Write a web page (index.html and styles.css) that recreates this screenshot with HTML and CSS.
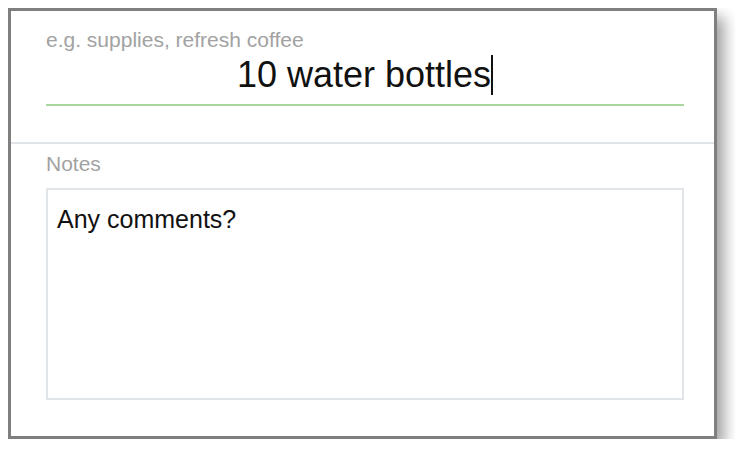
FILE: index.html
```html
<!DOCTYPE html>
<html>
<head>
<meta charset="utf-8">
<link rel="stylesheet" href="styles.css">
</head>
<body>
<div class="frame">
  <div class="top">
    <div class="hint">e.g. supplies, refresh coffee</div>
    <div class="title-field"><span class="value">10 water bottles</span><span class="caret"></span></div>
  </div>
  <div class="notes">
    <div class="label">Notes</div>
    <div class="notes-box">Any comments?</div>
  </div>
</div>
</body>
</html>
```
FILE: styles.css
```css
body {
  margin: 8px;
  background: #fff;
  font-family: "Liberation Sans", Arial, sans-serif;
}
.frame {
  width: 703px;
  background: #fff;
  border: 3px solid #7f7f7f;
  box-shadow: 7px 9px 14px rgba(0, 0, 0, 0.38);
}
.top {
  padding: 17px 30px 36px 35px;
  border-bottom: 2px solid #e0e4e8;
}
.hint {
  font-size: 21px;
  line-height: 24px;
  color: #a2a2a2;
}
.title-field {
  margin-top: 3px;
  font-size: 36px;
  line-height: 40px;
  color: #111;
  text-align: center;
  padding-bottom: 9px;
  border-bottom: 2px solid #a8d8a0;
  display: flex;
  justify-content: center;
  align-items: center;
}
.caret {
  display: inline-block;
  width: 2px;
  height: 40px;
  background: #111;
  margin-left: 0;
}
.notes {
  padding: 8px 30px 36px 35px;
}
.label {
  font-size: 21px;
  line-height: 24px;
  color: #a2a2a2;
}
.notes-box {
  margin-top: 12px;
  height: 179px;
  border: 2px solid #e1e5ea;
  padding: 15px 9px 14px;
  font-size: 25px;
  line-height: 29px;
  color: #111;
}
```
